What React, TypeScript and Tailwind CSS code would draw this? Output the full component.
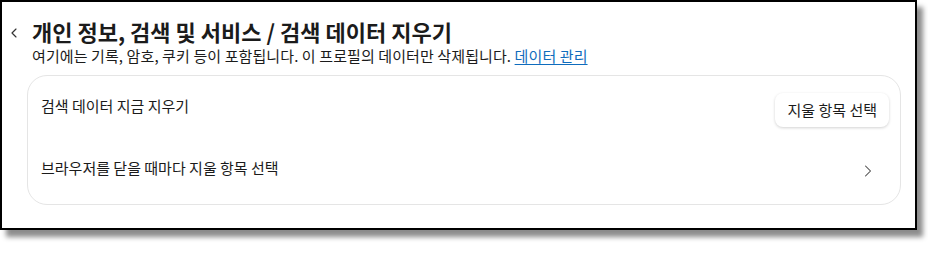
import { ChevronLeft, ChevronRight } from "lucide-react";

const font = { fontFamily: '"Noto Sans CJK KR", "Noto Sans", sans-serif' };

export default function App() {
  return (
    <div className="h-[256px] w-[928px] bg-white" style={font}>
      <div className="h-[230px] w-[917px] border-2 border-black bg-white shadow-[6px_7px_5px_rgba(0,0,0,0.45)]">
        <div className="flex items-start pt-[15px]">
          <ChevronLeft className="ml-[4px] mt-[8px] h-[16px] w-[16px] text-[#333]" strokeWidth={1.75} />
          <div className="ml-[10px]">
            <h1 className="text-[22px] font-bold leading-[29px] text-[#1b1b1b]">
              개인 정보, 검색 및 서비스 / 검색 데이터 지우기
            </h1>
            <p className="text-[15px] leading-[20px] tracking-[0.1px] text-[#1b1b1b]">
              여기에는 기록, 암호, 쿠키 등이 포함됩니다. 이 프로필의 데이터만 삭제됩니다.{" "}
              <a className="text-[#0f6cbd] underline underline-offset-2">데이터 관리</a>
            </p>
          </div>
        </div>
        <div className="ml-[25px] mt-[9px] w-[874px] rounded-[20px] border border-[#e5e5e5] bg-white">
          <div className="flex h-[62px] items-start justify-between pl-[13px] pr-[11px]">
            <span className="mt-[19px] text-[15px] leading-[22px] text-[#1b1b1b]">검색 데이터 지금 지우기</span>
            <button className="mt-[17px] h-[34px] rounded-[8px] bg-white px-[12px] text-[15px] text-[#1b1b1b] shadow-[0_1px_3px_rgba(0,0,0,0.18)]">
              지울 항목 선택
            </button>
          </div>
          <div className="flex h-[66px] items-center justify-between pb-[6px] pl-[13px] pr-[22px]">
            <span className="-mt-[1px] text-[15px] leading-[22px] text-[#1b1b1b]">브라우저를 닫을 때마다 지울 항목 선택</span>
            <ChevronRight className="mt-[5px] h-[20px] w-[20px] text-[#444]" strokeWidth={1.25} />
          </div>
        </div>
      </div>
    </div>
  );
}
